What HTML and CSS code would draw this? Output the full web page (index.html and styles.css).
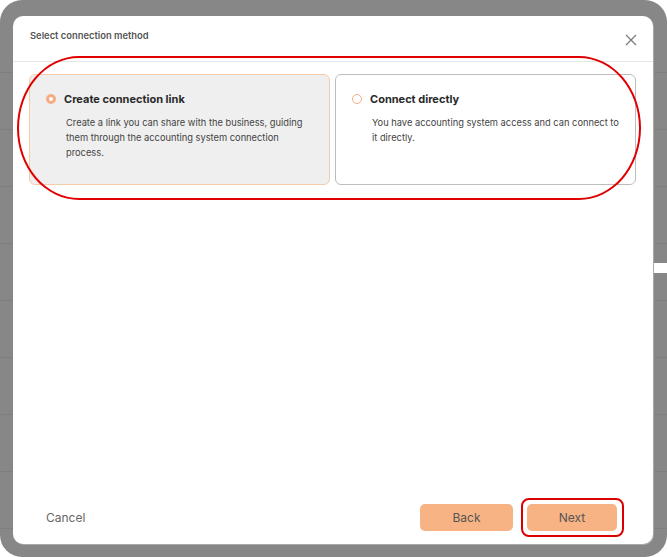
FILE: index.html
```html
<!DOCTYPE html>
<html>
<head>
<meta charset="utf-8">
<link rel="stylesheet" href="styles.css">
</head>
<body>
<div class="frame">
  <div class="backdrop">
    <div class="row"></div><div class="row"></div><div class="row"></div><div class="row"></div>
    <div class="row"></div><div class="row"></div><div class="row"></div><div class="row"></div>
    <div class="row"></div>
  </div>
  <div class="side-strip"></div>
  <div class="modal">
    <div class="modal-header">
      <span class="modal-title">Select connection method</span>
      <svg class="close" width="12" height="12" viewBox="0 0 12 12"><path d="M1 1L11 11M11 1L1 11" stroke="#7a7a7a" stroke-width="1.2" fill="none"/></svg>
    </div>
    <div class="modal-body">
      <div class="options">
        <div class="option selected">
          <div class="option-head"><span class="radio on"></span><span class="option-title">Create connection link</span></div>
          <p class="option-desc">Create a link you can share with the business, guiding them through the accounting system connection process.</p>
        </div>
        <div class="option">
          <div class="option-head"><span class="radio"></span><span class="option-title">Connect directly</span></div>
          <p class="option-desc">You have accounting system access and can connect to it directly.</p>
        </div>
      </div>
      <div class="annot annot-options"></div>
    </div>
    <div class="modal-footer">
      <span class="cancel">Cancel</span>
      <div class="actions">
        <button class="btn">Back</button>
        <button class="btn next">Next<span class="annot annot-next"></span></button>
      </div>
    </div>
  </div>
</div>
</body>
</html>
```
FILE: styles.css
```css
* { box-sizing: border-box; }
html, body { margin: 0; padding: 0; background: #fff; }
body { font-family: Inter, "Noto Sans", sans-serif; }
.frame {
  width: 667px; height: 557px; background: #878787; border-radius: 22px;
  overflow: hidden; position: relative;
}
.backdrop { padding-top: 16px; }
.row { height: 57px; border-bottom: 1px solid #7f7f7f; }
.side-strip {
  position: absolute; left: 653px; top: 263px; width: 14px; height: 10px; background: #fff;
}
.modal {
  position: absolute; left: 13px; top: 16px; width: 640px; height: 528px;
  background: #fff; border-radius: 10px; display: flex; flex-direction: column;
  box-shadow: 1px 1px 0 #a8a8a8;
}
.modal-header {
  height: 46px; border-bottom: 1px solid #e6e6e6; display: flex; align-items: center;
  justify-content: space-between; padding: 0 16px 0 17px; flex: none;
}
.modal-title { font-size: 9.4px; font-weight: 600; color: #555; margin-top: -6px; }
.close { margin-top: 2px; }
.modal-body { flex: 1; position: relative; padding: 12px 17px 0 16px; }
.options { display: flex; gap: 5px; }
.option {
  flex: 1; height: 111px; border: 1px solid #bdbdbd; border-radius: 6px;
  padding: 17px 16px 0 16px; background: #fff;
}
.option.selected { background: #efefef; border-color: #f8cba8; }
.option-head { display: flex; align-items: center; gap: 8px; }
.radio {
  width: 10px; height: 10px; border-radius: 50%; border: 1px solid #f3ad85; flex: none;
}
.radio.on { border: 3px solid #f5ac80; background: #fff; }
.option-title { font-size: 11px; font-weight: 700; color: #2a2a2a; }
.option-desc {
  margin: 9px 0 0 20px; font-size: 9.3px; line-height: 15px; color: #444;
}
.annot { position: absolute; border: 2px solid #e00000; pointer-events: none; }
.annot-options {
  left: 4px; top: -6px; width: 624px; height: 144px; border-radius: 62px / 72px;
}
.modal-footer {
  flex: none; height: 53px; display: flex; align-items: flex-start;
  justify-content: space-between; padding: 13px 36px 0 33px;
}
.cancel { font-size: 12px; color: #666; margin-top: 6px; }
.actions { display: flex; gap: 14px; }
.btn {
  position: relative; border: none; background: #f7b383; border-radius: 5px;
  height: 27px; width: 93px; font-family: inherit; font-size: 12px; color: #555; padding: 0;
}
.btn.next { width: 90px; }
.annot-next { left: -6px; top: -6px; right: -7px; bottom: -6px; border-width: 2.5px; border-color: #d80000; border-radius: 8px; }
```
